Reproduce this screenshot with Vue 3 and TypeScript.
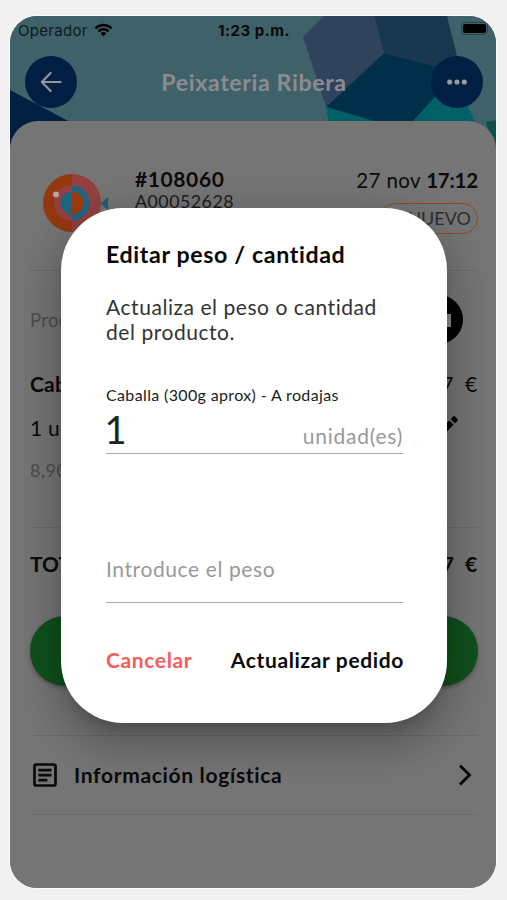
<script setup lang="ts">
import { ref } from 'vue'

const order = {
  id: '#108060',
  code: 'A00052628',
  day: '27 nov',
  time: '17:12',
  status: 'NUEVO',
  product: 'Caballa',
  units: '1 unidad',
  unitPrice: '8,90 €/kg',
  total: '2,67',
}

const quantity = ref('1')
const weight = ref('')
</script>

<template>
  <div class="page">
    <main class="phone">
      <header class="top">
        <svg class="art" viewBox="10 16 486 140" aria-hidden="true">
          <path fill="#2f435c" d="M324 16h50l10 37-58 54-23-70z" />
          <path fill="#19374f" d="M374 16h73l11 44v20l-23-14-51-13z" />
          <path fill="#003049" d="M384 53l51 13 35 6-58 50h-37l-49-15z" />
          <path fill="#006068" d="M326 107l52 15h-49zM412 122l23-25 20-20 20 45z" />
          <path fill="#0e4f49" d="M486 122l10-2v40z" />
          <path fill="#001f41" d="M10 90l62 33v33H10z" />
        </svg>
        <div class="status">
          <span class="carrier">Operador
            <svg class="wifi" viewBox="0 0 20 14" aria-hidden="true">
              <path d="M1.6 5.2a12 12 0 0 1 16.8 0M4.7 8.4a7.5 7.5 0 0 1 10.6 0" />
              <path class="dot" d="M10 13.6L6.9 10.6a4.4 4.4 0 0 1 6.2 0z" />
            </svg>
          </span>
          <span class="clock">1:23 p.m.</span>
          <span class="battery"><i></i></span>
        </div>
        <div class="nav">
          <button class="round" aria-label="Volver">
            <svg viewBox="0 0 24 24"><path d="M21.6 12H3.2M11.6 3L2.8 12l8.800 9" /></svg>
          </button>
          <h1>Peixateria Ribera</h1>
          <button class="round" aria-label="Más">
            <svg class="more" viewBox="0 0 24 24"><circle cx="4" cy="12" r="2.8" /><circle cx="12" cy="12" r="2.8" /><circle cx="20" cy="12" r="2.8" /></svg>
          </button>
        </div>
      </header>

      <section class="sheet">
        <div class="order">
          <svg class="fish" viewBox="0 0 68 60" aria-hidden="true">
            <path fill="#96380f" d="M30 1a29 29 0 0 0 0 58z" />
            <path fill="#944040" d="M30 1a29 29 0 0 1 0 58z" />
            <path fill="#944040" d="M30 12a18 18 0 0 0 0 36z" />
            <path fill="#1f6684" d="M30 18.500a11.500 11.500 0 0 0 0 23zM30 12.500a17.500 17.500 0 0 1 0 35z" />
            <path fill="#9c3b0f" d="M30 18.500a11.500 11.500 0 0 1 0 23z" />
            <path fill="#1f5f7d" d="M58.500 30.500l7.500-6.500v13z" />
            <circle cx="14" cy="21.500" r="3" fill="#b9a7a2" />
          </svg>
          <div class="ident">
            <strong>{{ order.id }}</strong>
            <span>{{ order.code }}</span>
          </div>
          <div class="when">
            <p>{{ order.day }} <b>{{ order.time }}</b></p>
            <span class="badge"><i></i>{{ order.status }}</span>
          </div>
        </div>

        <div class="products">
          <div class="row caption">
            <span>Productos</span>
            <span class="lock">
              <svg viewBox="0 0 26 24"><path d="M0 6h26v13H0z" /></svg>
            </span>
          </div>
          <div class="row name"><b>{{ order.product }}</b><span class="price">{{ order.total }} €</span></div>
          <div class="row units">
            <span>{{ order.units }}</span>
            <svg class="pencil" viewBox="0 0 24 24"><path d="M2 17.500V22h4.500L17.300 11.200l-4.500-4.500zM21.300 7.200a1.500 1.500 0 0 0 0-2.100l-2.400-2.400a1.500 1.500 0 0 0-2.100 0l-2.600 2.600 4.500 4.500z" /></svg>
          </div>
          <div class="row unit-price">{{ order.unitPrice }}</div>
        </div>

        <div class="row total"><b>TOTAL</b><b class="price">{{ order.total }} €</b></div>
        <button class="accept" aria-label="Aceptar"></button>

        <div class="logistics">
          <svg class="doc" viewBox="0 0 24 24"><rect x="1.500" y="1.500" width="21" height="21" rx="1.800" /><path d="M5.300 7.200h13.200M5.300 12.200h13.200M5.300 17.200h9" /></svg>
          <span>Información logística</span>
          <svg class="chev" viewBox="0 0 14 22"><path d="M2 1.500L11.500 11 2 20.500" /></svg>
        </div>
      </section>

      <form class="modal" @submit.prevent>
        <h2>Editar peso / cantidad</h2>
        <p class="help">Actualiza el peso o cantidad<br />del producto.</p>
        <label class="label">Caballa (300g aprox) - A rodajas</label>
        <div class="field qty"><span class="value">{{ quantity }}</span><span class="unit">unidad(es)</span></div>
        <div class="field weight"><span>{{ weight || 'Introduce el peso' }}</span></div>
        <footer>
          <button type="button" class="cancel">Cancelar</button>
          <button type="submit" class="submit">Actualizar pedido</button>
        </footer>
      </form>
    </main>
  </div>
</template>

<style>
body { background: #f1f1f1; }
</style>

<style scoped>
* { box-sizing: border-box; margin: 0; }
button { border: 0; padding: 0; background: none; font: inherit; letter-spacing: inherit; }
.page {
  height: 900px;
  padding: 16px 11px 12px 10px;
  overflow: hidden;
  font-family: Lato, "Liberation Sans", sans-serif;
  font-size: 21px;
  font-variant-ligatures: none;
  color: #0b0b0b;
}
.phone {
  position: relative;
  height: 872px;
  overflow: hidden;
  border-radius: 27px;
  background: #757575;
  box-shadow: 0 0 0 1px #fafafa;
}
.top { position: relative; height: 140px; background: #3f616a; }
.art { position: absolute; inset: 0; width: 486px; height: 140px; }
.status {
  position: relative;
  display: flex;
  align-items: center;
  justify-content: space-between;
  height: 28px;
  padding: 0 8px;
  font-family: Inter, "Liberation Sans", sans-serif;
  font-size: 15px;
}
.carrier { display: flex; align-items: center; gap: 6px; width: 182px; letter-spacing: .3px; color: #101a1d; }
.wifi { width: 19px; height: 14px; fill: none; stroke: #000; stroke-width: 2.500; }
.wifi .dot { fill: #000; stroke: none; }
.clock { font-weight: 700; letter-spacing: .52px; color: #04090b; }
.battery { display: flex; justify-content: flex-end; width: 180px; }
.battery i { width: 27px; height: 13px; margin: -3px 0 0; border: 1px solid #2c4349; border-radius: 4px; background: #000; background-clip: content-box; padding: 1px; }
.nav {
  position: relative;
  display: flex;
  align-items: center;
  justify-content: space-between;
  height: 52px;
  margin-top: 11.500px;
  padding: 0 12.500px 0 14.500px;
}
.nav h1 { font-size: 23.200px; line-height: 30px; font-weight: 700; letter-spacing: .6px; color: #8c8c90; }
.round { display: flex; align-items: center; justify-content: center; width: 52px; height: 52px; border-radius: 50%; background: #001f42; }
.round svg { width: 24px; height: 24px; fill: none; stroke: #93959b; stroke-width: 2.200; stroke-linecap: round; stroke-linejoin: round; }
.round .more { width: 22px; fill: #9a9ca2; stroke: none; }

.sheet {
  position: relative;
  height: 767px;
  margin-top: -35px;
  padding: 0 18px 0 20px;
  border-radius: 28px 28px 0 0;
  background: #757575;
}
.order { display: flex; height: 149.500px; padding-top: 45px; border-bottom: 1px solid #6b6b6b; }
.fish { width: 68px; height: 60px; margin: 6.500px 0 0 12px; }
.ident { display: flex; flex-direction: column; margin: 1px 0 0 25px; line-height: 23px; }
.ident strong { letter-spacing: .6px; }
.ident span { font-size: 17.800px; letter-spacing: .5px; color: #1c1c1c; }
.when { margin-left: auto; display: flex; flex-direction: column; align-items: flex-end; }
.when p { padding-top: 1px; line-height: 27px; font-size: 20.500px; letter-spacing: .4px; white-space: nowrap; }
.when b { letter-spacing: -.2px; }
.badge { display: flex; align-items: center; justify-content: flex-end; width: 98px; height: 31px; margin-top: 8.500px; padding-right: 6px; border: 1.500px solid #95491a; border-radius: 16px; font-size: 18px; color: #2e2e2e; }
.badge i { width: 10px; height: 10px; margin-right: 7px; border-radius: 50%; background: #95491a; }

.products { height: 257px; padding-top: 24px; border-bottom: 1px solid #6b6b6b; }
.row { display: flex; align-items: center; justify-content: space-between; }
.caption { height: 50px; padding-right: 15.500px; font-size: 18.500px; letter-spacing: .3px; color: #4d4d4d; }
.lock { display: flex; align-items: center; justify-content: center; width: 49px; height: 49px; border-radius: 50%; background: #000; }
.lock svg { width: 26px; height: 24px; fill: #8a8a8a; }
.name { height: 26px; margin-top: 26px; }
.name b { letter-spacing: .2px; }
.price { letter-spacing: .8px; word-spacing: 4.500px; }
.units { height: 26px; margin-top: 18px; letter-spacing: .2px; }
.pencil { width: 23px; height: 23px; margin: -5px 18px 0 0; }
.unit-price { height: 24px; margin-top: 17px; font-size: 18px; letter-spacing: .5px; color: #4d4d4d; }
.total { height: 26px; margin-top: 23px; }
.accept { display: block; width: 448px; height: 70px; margin-top: 39.500px; border-radius: 35px; background: #10501c; box-shadow: 0 2px 4px rgba(0, 0, 0, .3); }
.logistics { display: flex; align-items: center; height: 79.500px; margin-top: 49px; border-top: 1px solid #6b6b6b; border-bottom: 1px solid #6b6b6b; font-weight: 700; }
.logistics span { margin-left: 17px; letter-spacing: .67px; }
.doc { width: 24px; height: 24px; margin-left: 3px; fill: none; stroke: #090909; stroke-width: 2.700; }
.chev { width: 14px; height: 22px; margin: 0 6px 0 auto; fill: none; stroke: #050505; stroke-width: 2.800; }

.modal {
  position: absolute;
  left: 51px;
  top: 192px;
  width: 386px;
  height: 515px;
  padding: 31px 44px 0 45px;
  border-radius: 62px;
  background: #fff;
  box-shadow: 0 11px 15px -7px rgba(0, 0, 0, .2), 0 24px 38px 3px rgba(0, 0, 0, .14), 0 9px 46px 8px rgba(0, 0, 0, .12);
}
.modal h2 { font-size: 23.200px; line-height: 30px; letter-spacing: .62px; color: #070707; white-space: nowrap; }
.help { margin-top: 25px; line-height: 25px; letter-spacing: .55px; color: #333; white-space: nowrap; }
.label { display: block; margin-top: 40.500px; font-size: 16px; line-height: 20px; letter-spacing: .36px; color: #1c1c1c; white-space: nowrap; }
.field { display: flex; border-bottom: 1.500px solid #a5a8a6; }
.qty { align-items: baseline; justify-content: space-between; height: 45px; margin-top: 4.500px; line-height: 40px; }
.value { margin-left: -1.500px; font-size: 38px; color: #222; }
.unit { letter-spacing: .75px; color: #999; }
.weight { height: 49.500px; margin-top: 99.500px; line-height: 30px; letter-spacing: .6px; color: #999; }
footer { display: flex; justify-content: space-between; margin-top: 42px; line-height: 30px; font-weight: 700; letter-spacing: .63px; }
.cancel { color: #f95c5c; }
.submit { margin-right: -1px; color: #0a0a0a; }
</style>
